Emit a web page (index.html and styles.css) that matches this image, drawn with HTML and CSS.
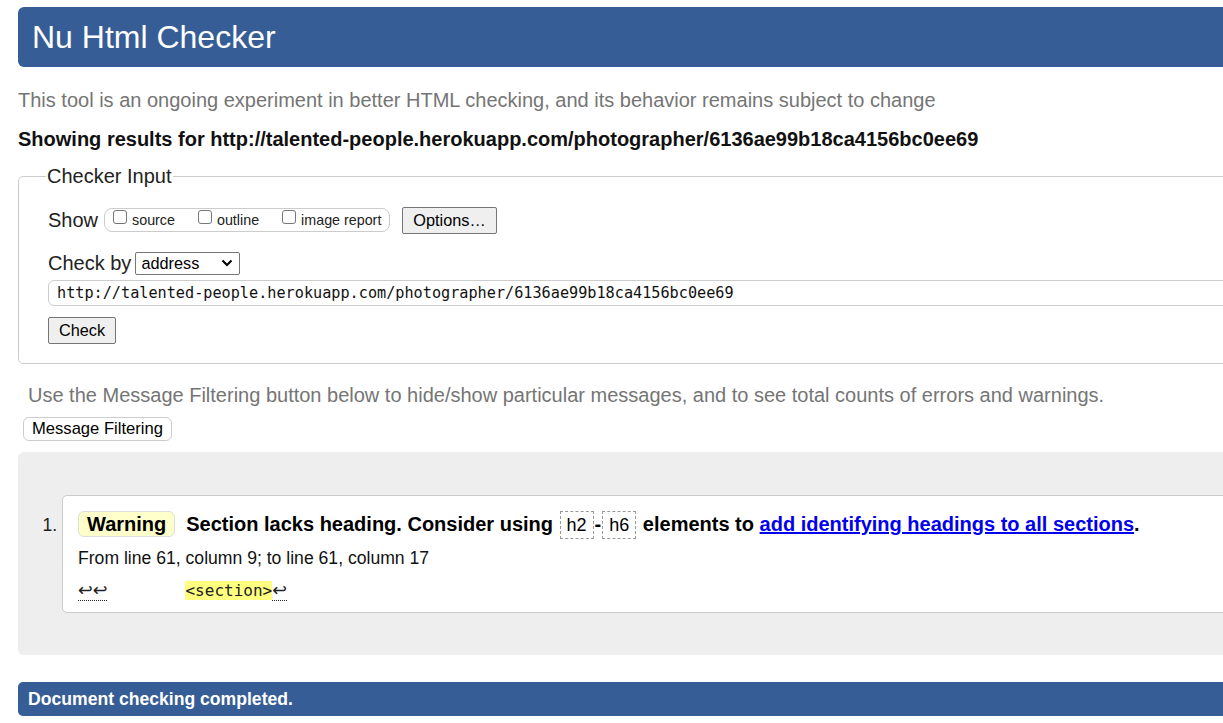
FILE: index.html
```html
<!DOCTYPE html>
<html lang="en">
<head>
<meta charset="utf-8">
<title>Nu Html Checker</title>
<link rel="stylesheet" href="styles.css">
</head>
<body>
<div class="page">
  <h1 class="title">Nu Html Checker</h1>
  <p class="intro">This tool is an ongoing experiment in better HTML checking, and its behavior remains subject to change</p>
  <p class="showing">Showing results for http://talented-people.herokuapp.com/photographer/6136ae99b18ca4156bc0ee69</p>
  <fieldset class="input">
    <legend>Checker Input</legend>
    <div class="row show-row">
      <span class="lbl">Show</span>
      <span class="checks">
        <label class="chk"><span class="box"></span>source</label>
        <label class="chk"><span class="box"></span>outline</label>
        <label class="chk"><span class="box"></span>image report</label>
      </span>
      <button class="btn options">Options…</button>
    </div>
    <div class="row by-row">
      <span class="lbl">Check by</span>
      <span class="select">address<svg class="chev" width="12" height="8" viewBox="0 0 12 8"><path d="M1.5 1.5 L6 6 L10.5 1.5" fill="none" stroke="#000" stroke-width="2"/></svg></span>
    </div>
    <div class="url">http://talented-people.herokuapp.com/photographer/6136ae99b18ca4156bc0ee69</div>
    <button class="btn check">Check</button>
  </fieldset>
  <p class="filter-note">Use the Message Filtering button below to hide/show particular messages, and to see total counts of errors and warnings.</p>
  <button class="filter-btn">Message Filtering</button>
  <div class="results">
    <ol class="msgs">
      <li class="msg">
        <p class="msg-head"><strong class="badge">Warning</strong><span class="msg-text">Section lacks heading. Consider using <code class="tag">h2</code>-<code class="tag">h6</code> elements to <a href="#">add identifying headings to all sections</a>.</span></p>
        <p class="loc">From line 61, column 9; to line 61, column 17</p>
        <p class="extract"><span class="lf">↩↩</span><span class="sp"></span><b class="hl">&lt;section&gt;</b><span class="lf">↩</span></p>
      </li>
    </ol>
  </div>
  <p class="done">Document checking completed.</p>
</div>
</body>
</html>
```
FILE: styles.css
```css
html, body {
  margin: 0;
  padding: 0;
  background: #fff;
  overflow: hidden;
}
body {
  font-family: "Liberation Sans", Arial, sans-serif;
  color: #222;
}
.page {
  width: 1260px;
  padding: 7px 0 0 18px;
}
.title {
  margin: 0;
  height: 60px;
  box-sizing: border-box;
  padding: 0 0 0 14px;
  background: #365d95;
  color: #fff;
  font-weight: normal;
  font-size: 32px;
  line-height: 60px;
  border-radius: 6px;
}
.intro {
  margin: 21px 0 0 0;
  font-size: 20px;
  line-height: 24px;
  color: #757575;
}
.showing {
  margin: 15px 0 0 0;
  font-size: 20px;
  line-height: 24px;
  font-weight: bold;
  color: #111;
}
.input {
  margin: 14px 0 0 0;
  border: 1px solid #ccc;
  border-radius: 5px;
  padding: 18px 0 19px 29px;
}
.input legend {
  font-size: 20px;
  padding: 0 1px;
  margin-left: -2px;
  color: #222;
}
.row {
  display: flex;
  align-items: center;
}
.lbl {
  font-size: 20px;
  color: #222;
}
.show-row {
  height: 28px;
}
.checks {
  display: flex;
  align-items: center;
  height: 22px;
  margin-left: 6px;
  padding: 0 8px 0 8px;
  border: 1px solid #ccc;
  border-radius: 8px;
}
.chk {
  display: flex;
  align-items: center;
  font-size: 14.3px;
  color: #222;
  margin-right: 23px;
}
.chk:last-child { margin-right: 0; }
.box {
  width: 14px;
  height: 14px;
  box-sizing: border-box;
  border: 1px solid #767676;
  border-radius: 3px;
  margin-right: 5px;
  margin-top: -6px;
}
.btn {
  font-family: "Liberation Sans", Arial, sans-serif;
  font-size: 16.3px;
  color: #000;
  background: #efefef;
  border: 1px solid #767676;
  border-radius: 2px;
  padding: 0 10px;
  height: 27px;
}
.options {
  margin-left: 12px;
}
.by-row {
  margin-top: 17px;
  height: 24px;
}
.select {
  display: flex;
  align-items: center;
  justify-content: space-between;
  box-sizing: border-box;
  width: 105px;
  height: 23px;
  margin-left: 4px;
  padding: 0 6px 0 5px;
  border: 1px solid #767676;
  border-radius: 2px;
  font-size: 16.3px;
  color: #000;
}
.url {
  margin-top: 5px;
  box-sizing: border-box;
  height: 26px;
  border: 1px solid #ccc;
  border-radius: 6px;
  padding: 0 0 0 8px;
  font-family: "DejaVu Sans Mono", "Liberation Mono", monospace;
  font-size: 15.2px;
  line-height: 24px;
  color: #111;
}
.check {
  margin-top: 11px;
}
.filter-note {
  margin: 19px 0 0 10px;
  font-size: 20px;
  line-height: 24px;
  color: #757575;
}
.filter-btn {
  margin: 10px 0 0 5px;
  font-family: "Liberation Sans", Arial, sans-serif;
  font-size: 16.6px;
  color: #000;
  background: #fff;
  border: 1px solid #ccc;
  border-radius: 6px;
  height: 24px;
  padding: 0 8px;
  display: block;
}
.results {
  margin-top: 11px;
  background: #eee;
  border-radius: 6px;
  padding: 43px 0 42px 0;
}
.msgs {
  margin: 0;
  padding: 0 0 0 44px;
  font-size: 17.6px;
}
.msg {
  background: #fff;
  border: 1px solid #ccc;
  border-radius: 5px;
  padding: 14px 0 0 15px;
  height: 118px;
  box-sizing: border-box;
}
.msg::marker {
  font-size: 17.6px;
  color: #222;
}
.msg p { margin: 0; }
.msg-head {
  font-size: 20px;
  line-height: 28px;
  font-weight: bold;
  color: #000;
}
.badge {
  display: inline-block;
  background: #ffffcc;
  border: 1px solid #ddd;
  border-radius: 6px;
  padding: 0 8px;
  line-height: 24px;
  margin-right: 11px;
}
.tag {
  font-family: "Liberation Sans", Arial, sans-serif;
  font-weight: normal;
  font-size: 18px;
  border: 1px dashed #999;
  padding: 3px 6px;
  margin: 0 1px;
}
.msg-text a {
  color: #0000ee;
  text-decoration: underline;
}
.loc {
  margin-top: 8px !important;
  font-size: 17.6px;
  line-height: 22px;
  color: #111;
}
.extract {
  margin-top: 10px !important;
  font-family: "DejaVu Sans Mono", "Liberation Mono", monospace;
  font-size: 16px;
  line-height: 22px;
  color: #222;
}
.lf {
  font-family: "DejaVu Sans", sans-serif;
  font-size: 17.6px;
  border-bottom: 1px dotted #222;
}
.sp {
  display: inline-block;
  width: 78px;
}
.hl {
  font-weight: normal;
  background: #ffff80;
  color: #222;
}
.done {
  margin: 27px 0 0 0;
  height: 34px;
  background: #365d95;
  color: #fff;
  font-weight: bold;
  font-size: 17.6px;
  line-height: 34px;
  padding-left: 10px;
  border-radius: 5px;
}
```
